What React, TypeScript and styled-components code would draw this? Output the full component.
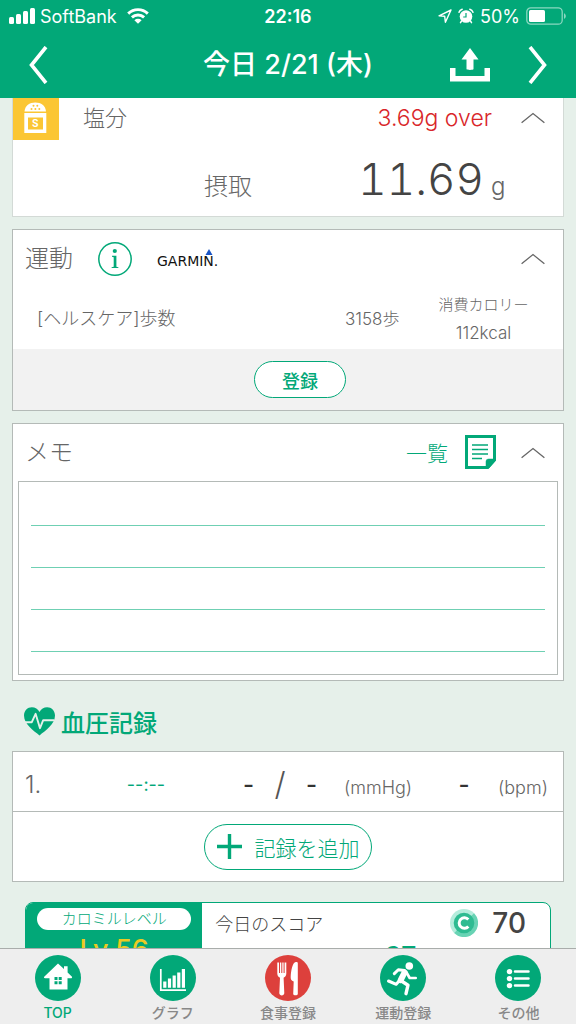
import React from "react";
import styled, { createGlobalStyle, css } from "styled-components";

const green = "#02a878";
const line = "#b4bab7";
const latin = 'Inter, "Noto Sans CJK JP", sans-serif';

const GlobalStyle = createGlobalStyle`
  *, *::before, *::after { box-sizing: border-box; }
  body {
    margin: 0;
    background: #e6f0ea;
    color: #666;
    font-family: ${latin};
    font-weight: 300;
  }
  button, textarea { font: inherit; color: inherit; }
  svg { display: block; flex: none; }
`;

const Shell = styled.div`
  display: flex;
  flex-direction: column;
  height: 100vh;
`;

const Header = styled.header`
  flex: none;
  background: ${green};
  color: #fff;
`;

const StatusBar = styled.div`
  display: grid;
  grid-template-columns: 1fr auto 1fr;
  align-items: center;
  height: 32px;
  padding: 0 9px;
  font-size: 18px;
  font-weight: 400;
`;

const StatusGroup = styled.div<{ $end?: boolean }>`
  display: flex;
  align-items: center;
  gap: ${(p) => (p.$end ? 6 : 5)}px;
  justify-content: ${(p) => (p.$end ? "flex-end" : "flex-start")};
`;

const Carrier = styled.span`
  margin-right: 5px;
`;

const Clock = styled.time`
  font-weight: 600;
`;

const NavBar = styled.div`
  display: grid;
  grid-template-columns: 1fr auto 1fr;
  align-items: center;
  height: 66px;
  padding: 0 28px;
`;

const NavActions = styled.div`
  display: flex;
  align-items: center;
  justify-content: flex-end;
  gap: 38px;
`;

const Title = styled.h1`
  margin: 0;
  font-size: 27px;
  line-height: 32px;
  font-weight: 500;
`;

const IconButton = styled.button`
  display: flex;
  align-items: center;
  justify-self: start;
  padding: 0;
  border: 0;
  background: none;
  cursor: pointer;
`;

const Content = styled.main`
  flex: 1;
  min-height: 0;
  padding: 0 12px;
  overflow-y: auto;
  scrollbar-width: none;
`;

const Card = styled.section<{ $clipped?: boolean }>`
  background: #fff;
  border: 1px solid ${line};
  margin-bottom: 12px;
  ${(p) =>
    p.$clipped &&
    css`
      border-top: 0;
      border-color: #d3dad6;
    `}
`;

const CardHeader = styled.div<{ $flush?: boolean }>`
  display: flex;
  align-items: center;
  height: ${(p) => (p.$flush ? 42 : 57)}px;
  padding: ${(p) => (p.$flush ? "0 18px 2px 0" : "0 18px 0 12px")};
`;

const CardTitle = styled.h2<{ $small?: boolean }>`
  margin: 0;
  font-size: ${(p) => (p.$small ? 22 : 24)}px;
  line-height: 32px;
  font-weight: 300;
`;

const SaltBadge = styled.div`
  align-self: flex-start;
  width: 46px;
  height: 42px;
  margin-right: 24px;
  background: #fbc634;
`;

const HeaderEnd = styled.div<{ $gap: number }>`
  display: flex;
  align-items: center;
  gap: ${(p) => p.$gap}px;
  margin-left: auto;
`;

const OverAmount = styled.span`
  color: #d9262a;
  font-size: 23px;
`;

const IntakeRow = styled.div`
  display: grid;
  grid-template-columns: 239fr 232fr 79fr;
  align-items: baseline;
  height: 76px;
  padding-top: 11px;
  font-size: 24px;
  line-height: 56px;
  text-align: right;
`;

const IntakeValue = styled.span`
  color: #444;
  font-size: 44px;
  font-feature-settings: "tnum";
`;

const IntakeUnit = styled.span`
  padding-left: 7px;
  text-align: left;
`;

const InfoButton = styled(IconButton)`
  margin: 0 25px;
`;

const GarminLogo = styled.span`
  display: flex;
  flex-direction: column;
  color: #111;
  font: 400 14px/13px "DejaVu Sans", sans-serif;

  svg { margin: 0 5px 0 auto; }
`;

const ExerciseRow = styled.div`
  display: grid;
  grid-template-columns: 307fr 106fr 137fr;
  align-items: center;
  height: 62px;
  padding-top: 2px;
  font-size: 17px;
  line-height: 28px;
`;

const ExerciseName = styled.span`
  padding-left: 24px;
  font-size: 18px;
`;

const ExerciseSteps = styled.span`
  padding-left: 25px;
`;

const Calories = styled.span`
  display: flex;
  flex-direction: column;
  align-items: center;
  padding-right: 22px;
`;

const CaloriesLabel = styled.span`
  font-size: 15px;
`;

const CardFooter = styled.div`
  display: flex;
  align-items: center;
  justify-content: center;
  height: 61px;
  padding-left: 24px;
  background: #f2f2f2;
`;

const PillButton = styled.button<{ $large?: boolean }>`
  display: flex;
  align-items: center;
  justify-content: center;
  gap: 13px;
  width: ${(p) => (p.$large ? 168 : 92)}px;
  height: ${(p) => (p.$large ? 46 : 37)}px;
  padding: 0;
  border: 1px solid ${green};
  border-radius: 24px;
  background: #fff;
  color: ${green};
  font-size: ${(p) => (p.$large ? 21 : 18)}px;
  font-weight: ${(p) => (p.$large ? 300 : 500)};
  cursor: pointer;
`;

const ListLink = styled.a`
  display: flex;
  align-items: center;
  gap: 17px;
  padding-bottom: 2px;
  color: ${green};
  font-size: 21px;
  text-decoration: none;
`;

const MemoBox = styled.textarea`
  display: block;
  width: calc(100% - 10px);
  height: 194px;
  margin: 0 5px 5px;
  padding: 2px 12px 0;
  border: 1px solid ${line};
  border-radius: 0;
  outline: 0;
  resize: none;
  background-color: #fff;
  background-image: linear-gradient(to bottom, transparent 41px, #6fd0b3 41px);
  background-size: 100% 42px;
  background-origin: content-box;
  background-clip: content-box;
  font-size: 20px;
  line-height: 42px;
`;

const SectionTitle = styled.h2`
  display: flex;
  align-items: center;
  gap: 6px;
  height: 58px;
  margin: 0 12px;
  padding-bottom: 2px;
  color: ${green};
  font-size: 24px;
  font-weight: 500;
`;

const RecordRow = styled.div`
  display: grid;
  grid-template-columns: 60fr 122fr 47fr 52fr 38fr 86fr 68fr 53fr;
  align-items: center;
  height: 60px;
  padding: 5px 12px 0;
  border-bottom: 1px solid ${line};
  font-size: 24px;
`;

const TimeButton = styled.button`
  padding: 0;
  border: 0;
  background: none;
  color: ${green};
  font-size: 18px;
  font-weight: 400;
  cursor: pointer;
`;

const Reading = styled.span<{ $align: "left" | "center" | "right" }>`
  color: #333;
  font-weight: 500;
  text-align: ${(p) => p.$align};
`;

const Slash = styled.span`
  color: #555;
  font-size: 32px;
  line-height: 32px;
  text-align: center;
`;

const Unit = styled.span`
  padding-top: 6px;
  font-size: 18px;
  white-space: nowrap;
`;

const AddRow = styled.div`
  display: flex;
  align-items: center;
  justify-content: center;
  height: 69px;
`;

const ScoreCard = styled.section`
  display: grid;
  grid-template-columns: 177fr 349fr;
  height: 120px;
  margin: 20px 13px 0;
  border: 1px solid ${green};
  border-radius: 8px;
  overflow: hidden;
  background: #fff;
`;

const LevelPanel = styled.div`
  padding: 5px 11px;
  background: ${green};
  color: #ecca22;
  font-size: 27px;
  line-height: 36px;
  font-weight: 500;
  text-align: center;
`;

const LevelLabel = styled.div`
  margin-bottom: 2px;
  border-radius: 11px;
  background: #fff;
  color: ${green};
  font-size: 15px;
  line-height: 22px;
  font-weight: 300;
`;

const ScorePanel = styled.div`
  padding: 0 24px 0 13px;
`;

const ScoreLine = styled.div`
  display: flex;
  align-items: center;
  height: 40px;
  color: #444;
  font-size: 18px;
`;

const Coins = styled.span`
  display: flex;
  align-items: center;
  gap: 14px;
  margin-left: auto;
  font-size: 28px;
  font-weight: 500;
`;

const ScoreValue = styled.div`
  padding-left: 60px;
  color: ${green};
  font-size: 26px;
  line-height: 26px;
  font-weight: 600;
  text-align: center;
`;

const TabBar = styled.nav`
  display: flex;
  flex: none;
  height: 76px;
  border-top: 1px solid #a9adab;
  background: #eee;
`;

const Tab = styled.a<{ $active?: boolean }>`
  display: flex;
  flex: 1;
  flex-direction: column;
  align-items: center;
  padding-top: 6px;
  color: ${(p) => (p.$active ? green : "#888")};
  font-size: 14px;
  line-height: 23px;
  font-weight: 500;
  text-decoration: none;
`;

const Collapse = ({ label }: { label: string }) => (
  <IconButton aria-label={`${label}を閉じる`}>
    <svg width="24" height="12" viewBox="0 0 24 12" fill="none" stroke="#666" strokeWidth="1.3">
      <path d="M.6 10.8 12 1.6l11.400 9.200" />
    </svg>
  </IconButton>
);

const Signal = () => (
  <svg width="26" height="16" viewBox="0 0 26 16" fill="#fff">
    <rect x="0" y="9" width="5" height="7" rx="1.500" />
    <rect x="7" y="6" width="5" height="10" rx="1.500" />
    <rect x="14" y="3" width="5" height="13" rx="1.500" />
    <rect x="21" y="0" width="5" height="16" rx="1.500" />
  </svg>
);

const Wifi = () => (
  <svg width="22" height="16" viewBox="0 0 22 16" fill="none" stroke="#fff" strokeWidth="2.900">
    <path d="M1.200 5.600a14 14 0 0 1 19.600 0" />
    <path d="M4.900 9.400a8.800 8.800 0 0 1 12.200 0" />
    <path d="M11 15.800 7.400 12.200a5.200 5.200 0 0 1 7.200 0z" fill="#fff" stroke="none" />
  </svg>
);

const Location = () => (
  <svg width="14" height="14" viewBox="0 0 14 14" fill="none" stroke="#fff" strokeWidth="1.400" strokeLinejoin="round">
    <path d="M13 1 1 6.800l5.700.5.700 5.900z" />
  </svg>
);

const Alarm = () => (
  <svg width="16" height="16" viewBox="0 0 16 16" fill="none">
    <circle cx="8" cy="8.500" r="6.300" fill="#fff" />
    <path d="m3.500 13-1 1.600M12.500 13l1 1.600M1 4.200A5 5 0 0 1 4.200 1.200M15 4.200a5 5 0 0 0-3.200-3" stroke="#fff" strokeWidth="1.500" strokeLinecap="round" />
    <path d="M8 5v4H5.200" stroke={green} strokeWidth="1.200" />
  </svg>
);

const Battery = () => (
  <svg width="41" height="18" viewBox="0 0 41 18" fill="none">
    <rect x=".8" y=".8" width="35.400" height="16.400" rx="4" stroke="#8ad7c0" strokeWidth="1.300" />
    <rect x="3" y="3" width="16" height="12" rx="1.500" fill="#fff" />
    <path d="M38 6.200c2.400.9 2.400 4.700 0 5.600z" fill="#8ad7c0" />
  </svg>
);

const Salt = () => (
  <svg width="46" height="42" viewBox="0 0 46 42">
    <path d="M11.500 13.500C12 7.500 16.500 4.500 22.300 4.500S32.500 7.500 33 13.500z" fill="#fff" />
    <path d="M11.300 15h22v20h-22z" fill="#fff" />
    <path d="M15 19.500h15v12H15z" fill="#fbc634" />
    <g fill="#fbc634">
      <circle cx="20.500" cy="7.800" r="1" />
      <circle cx="24.300" cy="7.800" r="1" />
      <circle cx="18.500" cy="11" r="1" />
      <circle cx="22.400" cy="11" r="1" />
      <circle cx="26.300" cy="11" r="1" />
    </g>
    <text x="22.400" y="29" fill="#fff" fontFamily="Inter, sans-serif" fontSize="10" fontWeight="700" textAnchor="middle">S</text>
  </svg>
);

const MemoIcon = () => (
  <svg width="31" height="34" viewBox="0 0 31 34" fill="none" stroke={green}>
    <path d="M1.500 1.500h28v23.500l-6.800 7.500H1.500z" strokeWidth="3" />
    <path d="M21 33v-6.500q0-2.500 2.500-2.500H30.500v1.500L24 33z" fill={green} strokeWidth=".5" />
    <path d="M7 10h16M7 14.500h16M7 19h16M7 23.500h10" strokeWidth="1.500" />
  </svg>
);

const HeartPulse = () => (
  <svg width="31" height="29" viewBox="0 0 31 29">
    <path d="M15.500 28.500C10 24 0 17.500 0 8.600 0 3.600 3.600.3 7.800.3c3.400 0 6.200 1.900 7.700 4.700C17 2.200 19.800.3 23.200.3 27.400.3 31 3.600 31 8.600c0 8.900-10 15.400-15.500 19.900z" fill={green} />
    <path d="M1 15.200h6.800l3.800-8.400 4.400 14.400 3.200-8h11" fill="none" stroke="#e6f0ea" strokeWidth="1.900" strokeLinejoin="round" />
  </svg>
);

const Coin = () => (
  <svg width="28" height="28" viewBox="0 0 28 28">
    <circle cx="14" cy="14" r="14" fill="#b5ecdc" />
    <path d="M24 4.200A14 14 0 0 1 4.200 24z" fill="#68d3b4" />
    <circle cx="14" cy="14" r="10.300" fill="#2dbb91" />
    <path d="M18.300 10.600a5.200 5.200 0 1 0 0 6.800" fill="none" stroke="#fff" strokeWidth="3" />
  </svg>
);

const Disc = ({ color = green, children }: { color?: string; children: React.ReactNode }) => (
  <svg width="46" height="46" viewBox="0 0 46 46">
    <circle cx="23" cy="23" r="23" fill={color} />
    {children}
  </svg>
);

const tabs = [
  {
    label: "TOP",
    icon: (
      <Disc>
        <path d="M23 8.500 29 14v-2.800h3.600v6.200L37 21.700c.3.800-.2 1.500-1 1.500h-3.500V34.500h-18V23.200H10c-.9 0-1.300-.8-.8-1.500z" fill="#fff" />
        <path d="M19.500 22h3v3h-3zM23.700 22h3v3h-3zM19.500 26.200h3v3h-3zM23.700 26.200h3v3h-3z" fill={green} />
      </Disc>
    ),
  },
  {
    label: "グラフ",
    icon: (
      <Disc>
        <path d="M10.800 14v21.200H36" fill="none" stroke="#fff" strokeWidth="1.700" />
        <path d="M13.200 26.500h3.200v6.300h-3.200zM17.900 23.500h3.200v9.300h-3.200zM22.600 20.500h3.200v12.300h-3.200zM27.200 17.500h3.200v15.300h-3.200zM31.800 14h3.200v18.800h-3.200z" fill="#fff" />
      </Disc>
    ),
  },
  {
    label: "食事登録",
    icon: (
      <Disc color="#dd403c">
        <path d="M12.300 7.500v11c0 2.300 1.200 3.500 2.700 4.200L14.300 38c0 3.300 5 3.300 5 0l-.7-15.300c1.500-.7 2.700-1.900 2.700-4.200v-11" fill="#fff" />
        <path d="M14.500 7v11M16.800 7v11M19.100 7v11" stroke="#dd403c" strokeWidth="1" />
        <path d="M32.800 8v31c0 1.800-4.600 1.800-4.600 0l.5-12.500c-2.500-.7-3.200-2.400-3-5 .3-5.300 1.800-14.500 5.100-14.500 1.300 0 2 .2 2 1z" fill="#fff" />
      </Disc>
    ),
  },
  {
    label: "運動登録",
    icon: (
      <Disc>
        <circle cx="29.300" cy="11" r="3.800" fill="#fff" />
        <g fill="none" stroke="#fff" strokeLinecap="round" strokeLinejoin="round">
          <path d="M14.300 18.600l4-3.900 6.200.9" strokeWidth="3" />
          <path d="M24.500 17.500l-3.800 7.700" strokeWidth="6" />
          <path d="M26.500 17.500l3.200 5.500h6" strokeWidth="2.700" />
          <path d="M19.500 25.500l-3.300 3.800-7.700-3.300" strokeWidth="3" />
          <path d="M21.500 26l6.500 4.200-2 8.500" strokeWidth="3.400" />
        </g>
      </Disc>
    ),
  },
  {
    label: "その他",
    icon: (
      <Disc>
        <g fill="#fff">
          <circle cx="14.500" cy="16.600" r="2.700" />
          <circle cx="14.500" cy="23.600" r="2.700" />
          <circle cx="14.500" cy="30.600" r="2.700" />
        </g>
        <path d="M20 16.600h13.500M20 23.600h13.500M20 30.600h13.500" stroke="#fff" strokeWidth="2.500" strokeLinecap="round" />
      </Disc>
    ),
  },
];

export default function App() {
  return (
    <Shell>
      <GlobalStyle />
      <Header>
        <StatusBar>
          <StatusGroup>
            <Signal />
            <Carrier>SoftBank</Carrier>
            <Wifi />
          </StatusGroup>
          <Clock>22:16</Clock>
          <StatusGroup $end>
            <Location />
            <Alarm />
            <span>50%</span>
            <Battery />
          </StatusGroup>
        </StatusBar>
        <NavBar>
          <IconButton aria-label="前の日">
            <svg width="20" height="38" viewBox="0 0 20 38" fill="none" stroke="#fff" strokeWidth="3.600">
              <path d="M18 1 3.500 19 18 37" />
            </svg>
          </IconButton>
          <Title>今日 2/21 (木)</Title>
          <NavActions>
            <IconButton aria-label="共有">
              <svg width="40" height="34" viewBox="0 0 40 34" fill="#fff">
                <path d="M0 20h5.500v8h29v-8H40v13.500H0z" />
                <path d="M20 0l8.500 11.500h-5V21c0 1.200-7 1.200-7 0v-9.500h-5z" />
              </svg>
            </IconButton>
            <IconButton aria-label="次の日">
              <svg width="20" height="38" viewBox="0 0 20 38" fill="none" stroke="#fff" strokeWidth="3.600">
                <path d="M2 1 16.500 19 2 37" />
              </svg>
            </IconButton>
          </NavActions>
        </NavBar>
      </Header>

      <Content>
        <Card $clipped>
          <CardHeader $flush>
            <SaltBadge>
              <Salt />
            </SaltBadge>
            <CardTitle $small>塩分</CardTitle>
            <HeaderEnd $gap={29}>
              <OverAmount>3.69g over</OverAmount>
              <Collapse label="塩分" />
            </HeaderEnd>
          </CardHeader>
          <IntakeRow>
            <span>摂取</span>
            <IntakeValue>11.69</IntakeValue>
            <IntakeUnit>g</IntakeUnit>
          </IntakeRow>
        </Card>

        <Card>
          <CardHeader>
            <CardTitle>運動</CardTitle>
            <InfoButton aria-label="運動について">
              <svg width="34" height="34" viewBox="0 0 34 34" fill={green}>
                <circle cx="17" cy="17" r="16.200" fill="none" stroke={green} strokeWidth="1.500" />
                <circle cx="16.800" cy="9" r="2.100" />
                <path d="M14 13.800h4.400v11l2 .4v.9h-6.800v-.9l2.100-.4V15.200l-1.700-.4z" />
              </svg>
            </InfoButton>
            <GarminLogo>
              <svg width="8" height="6" viewBox="0 0 8 6">
                <path d="M4 0l3.500 6h-7z" fill="#1a55c4" />
              </svg>
              GARMIN.
            </GarminLogo>
            <HeaderEnd $gap={0}>
              <Collapse label="運動" />
            </HeaderEnd>
          </CardHeader>
          <ExerciseRow>
            <ExerciseName>[ヘルスケア]歩数</ExerciseName>
            <ExerciseSteps>3158歩</ExerciseSteps>
            <Calories>
              <CaloriesLabel>消費カロリー</CaloriesLabel>
              <span>112kcal</span>
            </Calories>
          </ExerciseRow>
          <CardFooter>
            <PillButton>登録</PillButton>
          </CardFooter>
        </Card>

        <Card>
          <CardHeader>
            <CardTitle>メモ</CardTitle>
            <HeaderEnd $gap={25}>
              <ListLink href="#memos">
                一覧
                <MemoIcon />
              </ListLink>
              <Collapse label="メモ" />
            </HeaderEnd>
          </CardHeader>
          <MemoBox aria-label="メモ" />
        </Card>

        <SectionTitle>
          <HeartPulse />
          血圧記録
        </SectionTitle>
        <Card>
          <RecordRow>
            <span>1.</span>
            <TimeButton aria-label="測定時刻">--:--</TimeButton>
            <Reading $align="right">-</Reading>
            <Slash>/</Slash>
            <Reading $align="left">-</Reading>
            <Unit>(mmHg)</Unit>
            <Reading $align="center">-</Reading>
            <Unit>(bpm)</Unit>
          </RecordRow>
          <AddRow>
            <PillButton $large>
              <svg width="25" height="25" viewBox="0 0 25 25" stroke={green} strokeWidth="3.400">
                <path d="M12.500 0v25M0 12.500h25" />
              </svg>
              記録を追加
            </PillButton>
          </AddRow>
        </Card>

        <ScoreCard>
          <LevelPanel>
            <LevelLabel>カロミルレベル</LevelLabel>
            Lv.56
          </LevelPanel>
          <ScorePanel>
            <ScoreLine>
              今日のスコア
              <Coins>
                <Coin />
                70
              </Coins>
            </ScoreLine>
            <ScoreValue>97</ScoreValue>
          </ScorePanel>
        </ScoreCard>
      </Content>

      <TabBar>
        {tabs.map((tab, i) => (
          <Tab key={tab.label} href={`#tab-${i}`} $active={i === 0}>
            {tab.icon}
            {tab.label}
          </Tab>
        ))}
      </TabBar>
    </Shell>
  );
}
